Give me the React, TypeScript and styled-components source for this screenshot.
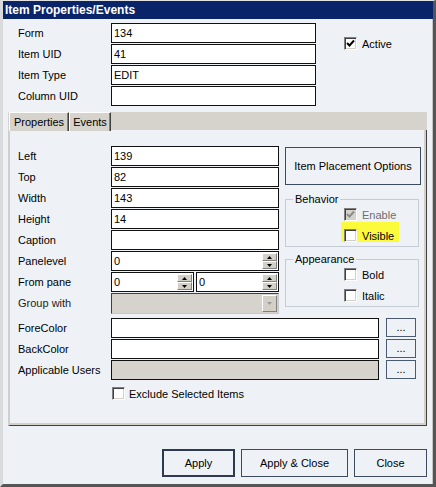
import React from 'react';
import styled, { createGlobalStyle } from 'styled-components';

const GlobalStyle = createGlobalStyle`
  body {
    margin: 0;
    font-family: 'Liberation Sans', Arial, sans-serif;
    font-size: 11px;
    color: #000;
  }
`;

const Check = ({ checked, disabled }: { checked?: boolean; disabled?: boolean }) => (
  <CheckBox $disabled={disabled}>
    {checked && (
      <svg width="9" height="9" viewBox="0 0 9 9">
        <polyline
          points="1,4 3.5,6.5 8,1.5"
          fill="none"
          stroke={disabled ? '#8a8a8a' : '#000'}
          strokeWidth="2"
        />
      </svg>
    )}
  </CheckBox>
);

const Arrow = ({ up, color = '#000' }: { up?: boolean; color?: string }) => (
  <svg width="5" height="3" viewBox="0 0 5 3">
    <polygon points={up ? '2.5,0 5,3 0,3' : '0,0 5,0 2.5,3'} fill={color} />
  </svg>
);

const SpinBox = ({ value }: { value: string }) => (
  <Spin>
    <SpinText>{value}</SpinText>
    <SpinButtons>
      <SpinHalf>
        <Arrow up />
      </SpinHalf>
      <SpinHalf>
        <Arrow />
      </SpinHalf>
    </SpinButtons>
  </Spin>
);

const App = () => {
  return (
    <>
      <GlobalStyle />
      <Window>
        <TitleBar>Item Properties/Events</TitleBar>

        <TopSection>
          <Label>Form</Label>
          <Field>134</Field>
          <Label>Item UID</Label>
          <Field>41</Field>
          <Label>Item Type</Label>
          <Field>EDIT</Field>
          <Label>Column UID</Label>
          <Field />
          <ActiveBox>
            <Check checked />
            <span>Active</span>
          </ActiveBox>
        </TopSection>

        <TabArea>
          <TabStrip>
            <Tab $w={60}>Properties</Tab>
            <Tab $w={42}>Events</Tab>
          </TabStrip>
          <Panel>
            <UpperSection>
              <LeftFields>
                <Label>Left</Label>
                <Field>139</Field>
                <Label>Top</Label>
                <Field>82</Field>
                <Label>Width</Label>
                <Field>143</Field>
                <Label>Height</Label>
                <Field>14</Field>
                <Label>Caption</Label>
                <Field />
                <Label>Panelevel</Label>
                <SpinBox value="0" />
                <Label>From pane</Label>
                <SpinPair>
                  <SpinBox value="0" />
                  <SpinBox value="0" />
                </SpinPair>
                <Label $muted>Group with</Label>
                <Combo>
                  <ComboButton>
                    <Arrow color="#9a9a9a" />
                  </ComboButton>
                </Combo>
              </LeftFields>

              <RightColumn>
                <PlacementButton>Item Placement Options</PlacementButton>
                <Group $top={8}>
                  <Legend>Behavior</Legend>
                  <OptionList>
                    <Option>
                      <Check checked disabled />
                      <OptionText $disabled>Enable</OptionText>
                    </Option>
                    <Highlight>
                      <Check />
                      <span>Visible</span>
                    </Highlight>
                  </OptionList>
                </Group>
                <Group $top={6}>
                  <Legend>Appearance</Legend>
                  <OptionList>
                    <Option>
                      <Check />
                      <span>Bold</span>
                    </Option>
                    <Option>
                      <Check />
                      <span>Italic</span>
                    </Option>
                  </OptionList>
                </Group>
              </RightColumn>
            </UpperSection>

            <LowerSection>
              <Label>ForeColor</Label>
              <Field />
              <DotsButton>...</DotsButton>
              <Label>BackColor</Label>
              <Field />
              <DotsButton>...</DotsButton>
              <Label>Applicable Users</Label>
              <Field $disabled />
              <DotsButton>...</DotsButton>
            </LowerSection>

            <ExcludeRow>
              <Check />
              <span>Exclude Selected Items</span>
            </ExcludeRow>
          </Panel>
        </TabArea>

        <Footer>
          <DialogButton $w={73} $default>
            Apply
          </DialogButton>
          <DialogButton $w={107}>Apply &amp; Close</DialogButton>
          <DialogButton $w={73}>Close</DialogButton>
        </Footer>
      </Window>
    </>
  );
};

const Window = styled.div`
  width: 436px;
  height: 487px;
  box-sizing: border-box;
  background: #eef2f6;
  border-top: 1px solid #e2e2e2;
  border-left: 3px solid #d9dadc;
  border-right: 3px solid #555;
  border-bottom: 3px solid #555;
  box-shadow: inset -1px 0 0 #c4c4c4;
  display: flex;
  flex-direction: column;
`;

const TitleBar = styled.div`
  height: 18px;
  line-height: 18px;
  background: #0a246a;
  color: #fff;
  font-weight: bold;
  font-size: 12px;
  padding-left: 2px;
`;

const TopSection = styled.div`
  display: grid;
  grid-template-columns: 93px 205px auto;
  grid-auto-rows: 20px;
  row-gap: 1px;
  align-items: center;
  margin: 4px 0 0 15px;
`;

const Label = styled.div<{ $muted?: boolean }>`
  grid-column: 1;
  white-space: nowrap;
  color: ${(p) => (p.$muted ? '#222' : '#000')};
`;

const Field = styled.div<{ $disabled?: boolean }>`
  height: 20px;
  box-sizing: border-box;
  border: 1px solid #111;
  background: ${(p) => (p.$disabled ? '#d6d3cc' : '#fff')};
  padding-left: 2px;
  line-height: 18px;
`;

const ActiveBox = styled.label`
  grid-column: 3;
  grid-row: 1 / span 2;
  margin-left: 28px;
  display: flex;
  align-items: center;
  gap: 5px;
`;

const CheckBox = styled.span<{ $disabled?: boolean }>`
  width: 13px;
  height: 13px;
  box-sizing: border-box;
  flex: none;
  display: inline-flex;
  align-items: center;
  justify-content: center;
  background: ${(p) => (p.$disabled ? '#d6d3cc' : '#fff')};
  border: 1px solid;
  border-color: #808080 #fff #fff #808080;
  box-shadow: inset 1px 1px 0 #404040, inset -1px -1px 0 #d4d0c8;
`;

const TabArea = styled.div`
  margin: 6px 6px 0 5px;
`;

const TabStrip = styled.div`
  height: 18px;
  background: #d6d3cc;
  display: flex;
  padding-left: 1px;
`;

const Tab = styled.div<{ $w: number }>`
  width: ${(p) => p.$w}px;
  box-sizing: border-box;
  height: 19px;
  line-height: 18px;
  text-align: center;
  background: #d6d3cc;
  border-top: 1px solid #fff;
  border-left: 1px solid #fff;
  border-right: 1px solid #404040;
  box-shadow: inset -1px 0 0 #808080;
`;

const Panel = styled.div`
  height: 296px;
  box-sizing: border-box;
  border-left: 2px solid #d2cfc8;
  border-right: 1px solid #404040;
  border-bottom: 1px solid #404040;
  box-shadow: inset -2px -2px 0 #d4d0c8;
  padding: 16px 5px 0 8px;
`;

const UpperSection = styled.div`
  display: flex;
  gap: 6px;
`;

const LeftFields = styled.div`
  display: grid;
  grid-template-columns: 93px 168px;
  grid-auto-rows: 20px;
  row-gap: 1px;
  align-items: center;
`;

const Spin = styled.div`
  height: 20px;
  box-sizing: border-box;
  border: 1px solid #111;
  background: #fff;
  display: flex;
  flex: 1;
`;

const SpinText = styled.div`
  flex: 1;
  padding-left: 2px;
  line-height: 18px;
`;

const SpinButtons = styled.div`
  width: 15px;
  display: flex;
  flex-direction: column;
  padding: 1px 1px 1px 0;
`;

const SpinHalf = styled.div`
  flex: 1;
  background: #d4d0c8;
  border-top: 1px solid #fff;
  border-left: 1px solid #fff;
  border-right: 1px solid #808080;
  border-bottom: 1px solid #808080;
  display: flex;
  align-items: center;
  justify-content: center;
`;

const SpinPair = styled.div`
  display: flex;
  gap: 2px;
`;

const Combo = styled.div`
  height: 21px;
  box-sizing: border-box;
  border: 1px solid;
  border-color: #404040 #c8c8c8 #c8c8c8 #404040;
  background: #d6d3cc;
  display: flex;
  justify-content: flex-end;
  padding: 1px;
`;

const ComboButton = styled.div`
  width: 15px;
  box-sizing: border-box;
  background: #d4d0c8;
  border-top: 1px solid #fff;
  border-left: 1px solid #fff;
  border-right: 1px solid #808080;
  border-bottom: 1px solid #808080;
  display: flex;
  align-items: center;
  justify-content: center;
`;

const RightColumn = styled.div`
  width: 136px;
  display: flex;
  flex-direction: column;
`;

const PlacementButton = styled.div`
  height: 38px;
  margin-top: 1px;
  box-sizing: border-box;
  border: 1px solid #3c4a5e;
  background: #eef2f6;
  display: flex;
  align-items: center;
  justify-content: center;
`;

const Group = styled.fieldset<{ $top: number }>`
  margin: ${(p) => p.$top}px 2px 0 0;
  padding: 2px 0 4px 0;
  border: 1px solid #c5ccd6;
`;

const Legend = styled.legend`
  margin-left: 7px;
  padding: 0 2px;
  line-height: 13px;
`;

const OptionList = styled.div`
  display: flex;
  flex-direction: column;
  gap: 8px;
  margin-left: 58px;
`;

const Option = styled.label`
  display: flex;
  align-items: center;
  gap: 5px;
  height: 13px;
`;

const OptionText = styled.span<{ $disabled?: boolean }>`
  color: ${(p) => (p.$disabled ? '#6d6d6d' : '#000')};
`;

const Highlight = styled(Option)`
  align-self: flex-start;
  background: #fbfb3c;
  padding: 7px 5px 0 3px;
  margin: -7px 0 0 -3px;
`;

const LowerSection = styled.div`
  display: grid;
  grid-template-columns: 86px 268px 30px;
  grid-auto-rows: 20px;
  column-gap: 7px;
  row-gap: 1px;
  align-items: center;
  margin-top: 5px;
`;

const DotsButton = styled.div`
  height: 19px;
  align-self: start;
  box-sizing: border-box;
  border: 1px solid #4a5a70;
  background: #eef2f6;
  text-align: center;
  line-height: 16px;
`;

const ExcludeRow = styled.label`
  display: flex;
  align-items: center;
  gap: 4px;
  margin: 7px 0 0 94px;
`;

const Footer = styled.div`
  display: flex;
  justify-content: flex-end;
  gap: 6px;
  margin: 23px 6px 0 0;
`;

const DialogButton = styled.div<{ $w: number; $default?: boolean }>`
  width: ${(p) => p.$w}px;
  height: 28px;
  box-sizing: border-box;
  border: ${(p) => (p.$default ? '2px solid #2e3b4e' : '1px solid #3c4a5e')};
  background: #eef2f6;
  display: flex;
  align-items: center;
  justify-content: center;
`;

export default App;
